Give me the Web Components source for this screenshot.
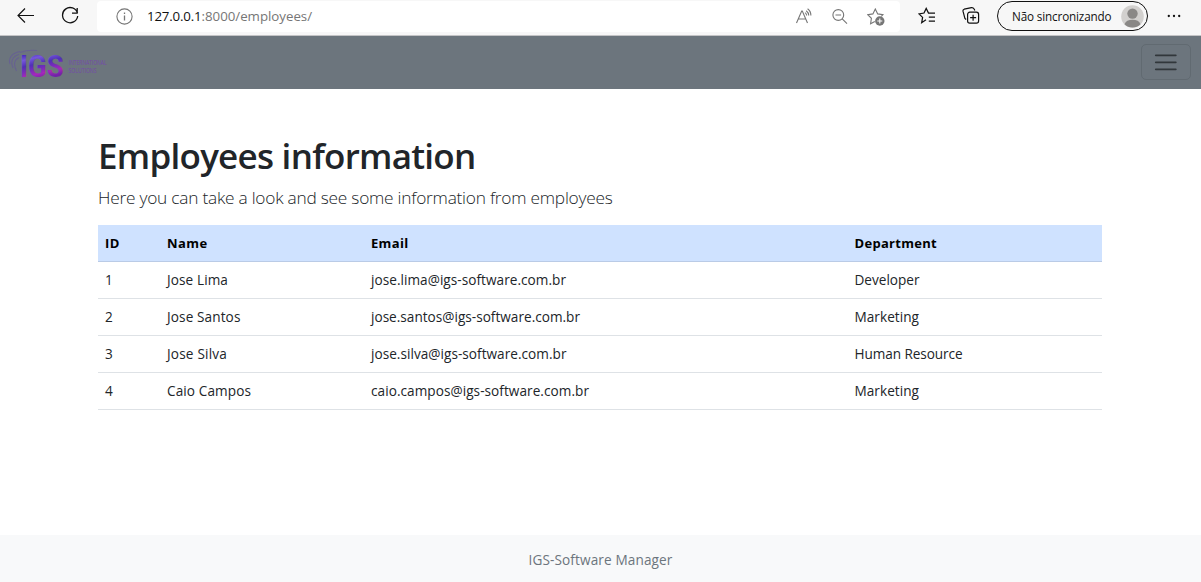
<!DOCTYPE html>
<html lang="en">
<head>
<meta charset="utf-8">
<title>Employees</title>
<style>
html,body{margin:0;height:100%;background:#fff;overflow:hidden}
body{font-family:"Open Sans","Noto Sans",sans-serif;font-size:14px;color:#212529}
</style>
</head>
<body>
<employees-app></employees-app>
<script>
function define(name, html, ready){
  const t=document.createElement('template'); t.innerHTML=html;
  customElements.define(name, class extends HTMLElement{
    constructor(){super();this.attachShadow({mode:'open'}).appendChild(t.content.cloneNode(true));}
    connectedCallback(){ if(ready) ready(this,this.shadowRoot); }
  });
}

/* One line of text whose tracking is adjusted to a given advance width. */
define('fit-text', `<style>:host{display:inline-block;white-space:pre}span{display:inline-block}</style><span><slot></slot></span>`, (el,root)=>{
  const s=root.querySelector('span'), w=parseFloat(el.getAttribute('w')), n=el.textContent.length;
  s.style.letterSpacing='0px';
  const d=(w-s.getBoundingClientRect().width)/n;
  s.style.letterSpacing=d+'px';
});

define('browser-bar', `<style>
:host{display:flex;box-sizing:border-box;height:36px;background:#f7f7f7;border-bottom:1px solid #c4c4c6;align-items:flex-start;color:#111}
svg{display:block;fill:none;stroke:currentColor;flex:none}
svg.solid{stroke:none;fill:#111}
.nav{display:flex;width:97px;height:32px;align-items:center;box-sizing:border-box;padding-left:16px;gap:26px}
.url{display:flex;width:803px;height:31px;margin-top:1px;background:#fff;border-radius:4px;align-items:center;box-sizing:border-box;padding:0 15px 0 19px;color:#767676;font-size:13.3px}
.info{margin-right:14px}.host{color:#111}.path{flex:1}
.url fit-text{padding-bottom:2px}
.tools{display:flex;gap:18px}
.right{display:flex;height:32px;align-items:center;padding-left:18px}
.pill{display:flex;box-sizing:border-box;width:151px;height:30px;border:1px solid #111;border-radius:15px;align-items:center;padding:0 3px 0 14px;justify-content:space-between;font-size:11.7px;margin:0 18px 0 17px}
</style>
<div class="nav">
<svg width="18" height="18" viewBox="0 0 18 18" stroke-width="1.15"><path d="M18 8.5H2M9 1.5L2 8.5l7 7"/></svg>
<svg width="20" height="20" viewBox="0 0 20 20" stroke-width="1.3"><path d="M17.5 7.2A7.6 7.6 0 1 0 17.7 10M17.2 2v5.2H12"/></svg>
</div>
<div class="url">
<svg class="info" width="17" height="17" viewBox="0 0 17 17" stroke-width="1.1"><circle cx="8.5" cy="8.5" r="7.6"/><path d="M8.5 7.4v5M8.5 4.6v1.4" stroke-width="1.3"/></svg>
<fit-text class="host" w="54.5">127.0.0.1</fit-text><fit-text class="path" w="110.5">:8000/employees/</fit-text>
<div class="tools">
<svg width="18" height="18" viewBox="0 0 18 18" stroke-width="1.1"><path d="M1.5 15L6.7 3h.6l5.2 12M3.4 11h7.2M10 4.6c1.1.7 1.6 1.7 1.6 3M11.2 2.7c1.7 1.2 2.5 2.7 2.5 4.9M12.6.8c2.2 1.6 3.3 3.8 3.3 6.8"/></svg>
<svg width="18" height="18" viewBox="0 0 18 18" stroke-width="1.1"><circle cx="7.3" cy="7" r="5.4"/><path d="M4.5 7h5.6M11.2 10.9l4.8 4.8"/></svg>
<svg width="18" height="18" viewBox="0 0 18 18" stroke-width="1.1"><path d="M7.8 13.4L3.6 15.7l.8-5.4L.7 6.7l5.2-.8L8.3 1l2.4 4.9 5.2.8-1.5 1.6"/><circle cx="12.8" cy="13" r="4.7" fill="#767676" stroke="none"/><path d="M12.8 10.5v5M10.3 13h5" stroke="#fff"/></svg>
</div></div>
<div class="right">
<svg width="18" height="18" viewBox="0 0 18 18" stroke-width="1.25"><path d="M8 12.7l-4.3 3 .9-5.3L1 6.9l5-.9L8.2 1.4 10.5 6h6.5M10.8 10H17M10.8 14H17"/></svg>
<svg style="margin-left:26px" width="18" height="18" viewBox="0 0 18 18" stroke-width="1.2"><rect x="5.6" y="5.2" width="11" height="11" rx="2.2"/><path d="M11.1 7.7v6M8.1 10.7h6M4.2 12.5L2.9 11.4 1 4.2Q.7 2.7 2.2 2.2L9.5.7Q11.2.5 12.3 2.3l.5 1.1"/></svg>
<div class="pill"><fit-text w="99.5">Não sincronizando</fit-text>
<svg class="solid" width="23" height="23" viewBox="0 0 23 23"><circle cx="11.5" cy="11.5" r="11.3" fill="#d2d0ce"/><circle cx="11.5" cy="8.6" r="5.2" fill="#8a8886"/><path d="M3.5 19.3c1-3.2 4-4.6 8-4.6s7 1.4 8 4.6a11.3 11.3 0 0 1-16 0z" fill="#8a8886"/></svg></div>
<svg class="solid" width="16" height="16" viewBox="0 0 16 16"><circle cx="2.8" cy="8" r="1.15"/><circle cx="8" cy="8" r="1.15"/><circle cx="13.2" cy="8" r="1.15"/></svg>
</div>`);

define('igs-logo', `<style>:host{display:block;width:120px;height:50px}svg{display:block}text{font-family:"Open Sans",sans-serif}</style>
<svg width="120" height="50" viewBox="0 -12 120 50">
<defs><linearGradient id="g" gradientUnits="userSpaceOnUse" x1="26" y1="4" x2="32" y2="30"><stop offset="0" stop-color="#4a2cc0"/><stop offset=".18" stop-color="#7657dc"/><stop offset=".42" stop-color="#5030b8"/><stop offset=".62" stop-color="#7a2cba"/><stop offset=".8" stop-color="#a628bb"/><stop offset="1" stop-color="#7222a8"/></linearGradient></defs>
<g fill="none" stroke="#665b98" stroke-width="1.1"><path d="M2 15C0 9 4 4 12 2.500M5 19C2 12 5 7 11 5.500M8.500 22C5.500 16 6 11 11 8.500M12 3.500Q20 .5 29 1.500" opacity=".75"/></g>
<text x="12" y="28" font-size="31" font-weight="700" fill="url(#g)" textLength="43.500" lengthAdjust="spacingAndGlyphs" font-family="Lato" style="font-family:Roboto,sans-serif">IGS</text>
<g fill="#7448ab" font-size="6.2"><text x="60.500" y="16" textLength="38" lengthAdjust="spacingAndGlyphs">INTERNATIONAL</text><text x="60.500" y="24" textLength="28" lengthAdjust="spacingAndGlyphs">SOLUTIONS</text></g>
</svg>`);

define('site-nav', `<style>
:host{display:flex;box-sizing:border-box;height:53px;background:#6c757d;align-items:center;justify-content:space-between;padding:0 10px 1px 8px}
button{box-sizing:border-box;width:50px;height:36px;margin:0;padding:0;border:1px solid #616a71;border-radius:5px;background:none;display:flex;align-items:center;justify-content:center}
svg{display:block}
</style><igs-logo></igs-logo><button aria-label="Menu"><svg width="28" height="28" viewBox="0 0 28 28"><path d="M3.800 7.300h20M3.800 14.300h20M3.800 21.300h20" stroke="#31373b" stroke-width="1.800" stroke-linecap="round"/></svg></button>`);

define('table-row', `<style>
:host{display:grid;grid-template-columns:62px 204px 483.500px 1fr;box-sizing:border-box;height:37px;align-items:center;border-bottom:1px solid #dee2e6;padding:0 0 2px 7px;font-size:13.6px;color:#212529}
:host([head]){background:#cfe2ff;border-color:#bacbe6;font-weight:700;color:#000;font-size:13px;padding-bottom:0}
</style><slot></slot>`);

define('employee-table', `<style>:host{display:block}</style>
<table-row head><fit-text w="15">ID</fit-text><fit-text w="40.5">Name</fit-text><fit-text w="37.5">Email</fit-text><fit-text w="82.5">Department</fit-text></table-row>
<table-row><fit-text w="7.5">1</fit-text><fit-text w="61">Jose Lima</fit-text><fit-text w="195">jose.lima@igs-software.com.br</fit-text><fit-text w="65">Developer</fit-text></table-row>
<table-row><fit-text w="7.5">2</fit-text><fit-text w="73.5">Jose Santos</fit-text><fit-text w="209">jose.santos@igs-software.com.br</fit-text><fit-text w="64.5">Marketing</fit-text></table-row>
<table-row><fit-text w="7.5">3</fit-text><fit-text w="60">Jose Silva</fit-text><fit-text w="195.5">jose.silva@igs-software.com.br</fit-text><fit-text w="108">Human Resource</fit-text></table-row>
<table-row><fit-text w="7.5">4</fit-text><fit-text w="84">Caio Campos</fit-text><fit-text w="218">caio.campos@igs-software.com.br</fit-text><fit-text w="64.5">Marketing</fit-text></table-row>`);

define('page-intro', `<style>
:host{display:block}
h1{margin:0;font-size:35px;line-height:43px;font-weight:550;color:#212529}
p{margin:7px 0 0;font-size:17.3px;line-height:27px;font-weight:300;color:#212529}
</style><h1><fit-text w="377.5">Employees information</fit-text></h1><p><fit-text w="514.5">Here you can take a look and see some information from employees</fit-text></p>`);

define('site-footer', `<style>:host{display:flex;height:47px;background:#f8f9fa;align-items:center;justify-content:center;color:#6c757d;font-size:13.6px;box-sizing:border-box;padding-top:1px}</style><fit-text w="144">IGS-Software Manager</fit-text>`);

define('employees-app', `<style>
:host{display:flex;flex-direction:column;height:582px}
main{flex:1;padding:45px 99px 0 98px}
employee-table{margin-top:14px}
</style><browser-bar></browser-bar><site-nav></site-nav><main><page-intro></page-intro><employee-table></employee-table></main><site-footer></site-footer>`);
</script>
</body>
</html>
